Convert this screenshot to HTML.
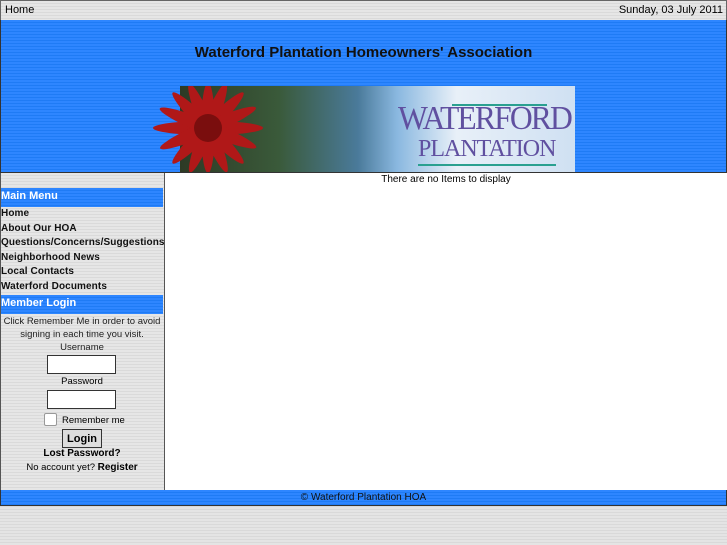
<!DOCTYPE html>
<html><head><style>
body{margin:0;width:727px;height:545px;background:repeating-linear-gradient(#e4e4e4 0 2px,#d9d9d9 2px 3px);font-family:"Liberation Sans",sans-serif;position:relative;overflow:hidden}
.a{position:absolute}
.blue{background:repeating-linear-gradient(#2e86ff 0 2px,#1f7bf5 2px 3px)}
.gray{background:repeating-linear-gradient(#e6e6e6 0 2px,#dadada 2px 3px)}
.menu div{font-size:10px;font-weight:bold;height:14.5px;line-height:14.5px;padding-left:1px;color:#111;letter-spacing:0.1px}
.inp{position:absolute;left:47px;width:67px;height:17px;background:#fff;border:1px solid #333}
</style></head><body>
<div class="a gray" style="left:0;top:0;width:725px;height:19px;border:1px solid #666;font-size:11px;line-height:19px">
<span style="position:absolute;left:4px">Home</span><span style="position:absolute;right:3px">Sunday, 03 July 2011</span></div>
<div class="a blue" style="left:0;top:20px;width:725px;height:152px;border:1px solid #333;border-top:0"></div>
<div class="a" style="left:0;top:44px;width:727px;text-align:center;font-size:15px;font-weight:bold;color:#111">Waterford Plantation Homeowners' Association</div>
<div class="a" style="left:180px;top:86px;width:395px;height:86px;background:linear-gradient(90deg,#2d3a25 0,#3a5a3a 25%,#4a7a9a 45%,#8ab8e0 55%,#e8f0f8 70%,#cfe0f2 100%)"></div>
<svg class="a" style="left:150px;top:86px" width="120" height="86"><g fill="#b01818" transform="translate(58,42)"><ellipse rx="55" ry="7"/><ellipse rx="52" ry="7" transform="rotate(22)"/><ellipse rx="50" ry="7" transform="rotate(45)"/><ellipse rx="48" ry="7" transform="rotate(67)"/><ellipse rx="45" ry="7" transform="rotate(90)"/><ellipse rx="48" ry="7" transform="rotate(112)"/><ellipse rx="50" ry="7" transform="rotate(135)"/><ellipse rx="52" ry="7" transform="rotate(157)"/></g><circle cx="58" cy="42" r="14" fill="#7a0e0e"/></svg>
<div class="a" style="left:398px;top:100px;font-family:'Liberation Serif',serif;color:#6050a0;font-size:34px;letter-spacing:-2px;transform:scaleX(0.93);transform-origin:left">WATERFORD</div>
<div class="a" style="left:418px;top:136px;font-family:'Liberation Serif',serif;color:#6050a0;font-size:24px;letter-spacing:-1px">PLANTATION</div>
<div class="a" style="left:452px;top:104px;width:95px;height:2px;background:#2aa090"></div>
<div class="a" style="left:418px;top:164px;width:138px;height:2px;background:#2aa090"></div>
<div class="a gray" style="left:0;top:173px;width:163px;height:317px;border-left:1px solid #555;border-right:1px solid #555"></div>
<div class="a" style="left:165px;top:173px;width:562px;height:317px;background:#fff"></div>
<div class="a" style="left:165px;top:174px;width:562px;text-align:center;font-size:10px">There are no Items to display</div>
<div class="a blue" style="left:1px;top:188px;width:162px;height:19px;color:#fff;font-size:11px;font-weight:bold;line-height:16px">Main Menu</div>
<div class="a menu" style="left:0;top:207px;width:164px"><div>Home</div><div>About Our HOA</div><div>Questions/Concerns/Suggestions</div><div>Neighborhood News</div><div>Local Contacts</div><div>Waterford Documents</div></div>
<div class="a blue" style="left:1px;top:295px;width:162px;height:19px;color:#fff;font-size:11px;font-weight:bold;line-height:16px">Member Login</div>
<div class="a" style="left:0;top:315px;width:164px;text-align:center;font-size:9.5px;line-height:13px;color:#222">Click Remember Me in order to avoid<br>signing in each time you visit.<br>Username</div>
<div class="inp" style="top:355px"></div>
<div class="a" style="left:0;top:376px;width:164px;text-align:center;font-size:9.5px">Password</div>
<div class="inp" style="top:390px"></div>
<div class="a" style="left:44px;top:413px;width:11px;height:11px;background:#fff;border:1px solid #999;border-radius:2px"></div>
<div class="a" style="left:62px;top:415px;font-size:9.5px">Remember me</div>
<div class="a" style="left:62px;top:429px;width:38px;height:17px;border:1px solid #333;background:#ddd;font-size:11px;font-weight:bold;text-align:center;line-height:18px">Login</div>
<div class="a" style="left:0;top:448px;width:164px;text-align:center;font-size:10px;font-weight:bold">Lost Password?</div>
<div class="a" style="left:0;top:462px;width:164px;text-align:center;font-size:9.5px">No account yet? <b style="font-size:10px">Register</b></div>
<div class="a blue" style="left:0;top:490px;width:725px;height:15px;border:1px solid #333;border-top:0;font-size:10px;text-align:center;line-height:15px;color:#111">© Waterford Plantation HOA</div>
</body></html>
